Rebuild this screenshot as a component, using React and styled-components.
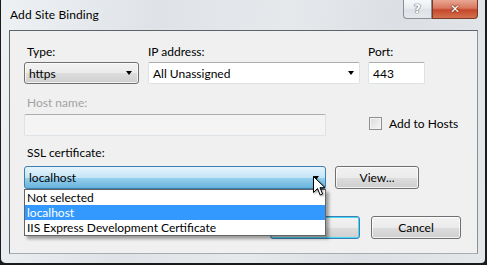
import React from 'react';
import styled, { createGlobalStyle } from 'styled-components';

const Global = createGlobalStyle`
  html, body {
    margin: 0;
    padding: 0;
    background: #1a1a1a;
  }
  body {
    font-family: "Lato", "Noto Sans", sans-serif;
    font-size: 12px;
  }
`;

const Window = styled.div`
  position: relative;
  width: 487px;
  height: 265px;
  box-sizing: border-box;
  border-left: 1px solid #1b1b1b;
  border-right: 2px solid #1b1b1b;
  border-bottom: 2px solid #1b1b1b;
  border-radius: 0 0 6px 6px;
  background: linear-gradient(100deg, #eef1f4 0%, #dfe3e7 30%, #e6e9ec 55%, #dcdfe3 75%, #e4e7ea 100%);
  display: flex;
  flex-direction: column;
  overflow: hidden;
`;

const TitleBar = styled.div`
  height: 30px;
  display: flex;
  justify-content: space-between;
  align-items: flex-start;
  padding: 0 7px 0 9px;
`;

const Title = styled.div`
  margin-top: 7px;
  font-size: 12px;
  color: #000;
  letter-spacing: 0.1px;
`;

const Caption = styled.div`
  display: flex;
`;

const CapButton = styled.div`
  width: ${p => p.$w}px;
  height: 19px;
  box-sizing: border-box;
  border: 1px solid ${p => (p.$close ? '#7a3a2a' : '#8a8f95')};
  border-top: none;
  border-radius: ${p => (p.$close ? '0 0 4px 0' : '0 0 0 4px')};
  background: ${p =>
    p.$close
      ? 'linear-gradient(#e8a794 0%, #d9785d 45%, #c5482b 55%, #d4714e 100%)'
      : 'linear-gradient(#f6f8fa 0%, #e9ecef 45%, #dde1e5 55%, #e6e9ec 100%)'};
  display: flex;
  align-items: center;
  justify-content: center;
  font-family: "DejaVu Sans", sans-serif;
  font-weight: bold;
  font-size: 12px;
  color: #fff;
  text-shadow: ${p =>
    p.$close
      ? '0 0 2px #5a1a0a, 0 0 1px #5a1a0a'
      : '0 0 1px #5d6670, 0 0 1px #5d6670, 0 0 1px #5d6670'};
`;

const Client = styled.div`
  margin: 0 7px 0 8px;
  height: 224px;
  box-sizing: border-box;
  background: #f0f0f0;
  border-top: 1px solid #5f6468;
  border-left: 1px solid #5f6468;
  border-right: 1px solid #8c9196;
  border-bottom: 1px solid #a7acb0;
  padding: 13px 0 0 14px;
  display: flex;
  flex-direction: column;
`;

const Row = styled.div`
  display: flex;
  align-items: ${p => p.$align || 'flex-start'};
  gap: ${p => p.$gap || 0}px;
  margin-top: ${p => p.$mt || 0}px;
`;

const Field = styled.div`
  display: flex;
  flex-direction: column;
  width: ${p => p.$w}px;
  margin-right: ${p => p.$mr || 0}px;
`;

const Label = styled.div`
  line-height: 15px;
  height: 15px;
  margin-bottom: ${p => p.$mb || 3}px;
  padding-left: ${p => (p.$flush ? 0 : 3)}px;
  color: ${p => (p.$disabled ? '#a3a3a3' : '#000')};
`;

const Arrow = styled.span`
  width: 0;
  height: 0;
  border-left: 3.5px solid transparent;
  border-right: 3.5px solid transparent;
  border-top: 4px solid #000;
  margin-right: ${p => p.$mr || 5}px;
`;

const ComboButton = styled.div`
  height: 22px;
  box-sizing: border-box;
  border: 1px solid #707070;
  border-radius: 3px;
  background: linear-gradient(#f2f2f2 0%, #ebebeb 50%, #dddddd 51%, #cfcfcf 100%);
  box-shadow: inset 0 0 0 1px rgba(255, 255, 255, 0.7);
  display: flex;
  align-items: center;
  justify-content: space-between;
  padding-left: 4px;
`;

const TextBox = styled.div`
  height: 22px;
  box-sizing: border-box;
  border: 1px solid #dde2e7;
  border-top-color: #abadb3;
  border-radius: 2px;
  background: ${p => (p.$disabled ? '#f4f4f4' : '#fff')};
  display: flex;
  align-items: center;
  justify-content: space-between;
  padding-left: 4px;
`;

const Check = styled.span`
  width: 13px;
  height: 13px;
  box-sizing: border-box;
  border: 1px solid #8e8f8f;
  background: linear-gradient(135deg, #dcdcdc, #f6f6f6);
  box-shadow: inset 0 0 0 1px #f4f4f4;
`;

const CheckRow = styled.label`
  display: flex;
  align-items: center;
  gap: 7px;
  margin-left: 43px;
  margin-bottom: 5px;
`;

const SslWrap = styled.div`
  position: relative;
  width: 302px;
`;

const ActiveCombo = styled.div`
  height: 23px;
  box-sizing: border-box;
  border: 1px solid #3c7fb1;
  border-radius: 3px;
  background: linear-gradient(#e5f4fc 0%, #c4e5f6 50%, #98d1ef 51%, #68b3db 100%);
  display: flex;
  align-items: center;
  justify-content: space-between;
  padding-left: 4px;
`;

const List = styled.div`
  position: absolute;
  left: 0;
  top: 100%;
  width: 302px;
  box-sizing: border-box;
  background: #fff;
  border: 1px solid #646464;
  box-shadow: 3px 3px 3px rgba(0, 0, 0, 0.35);
  z-index: 5;
`;

const Item = styled.div`
  height: 15px;
  line-height: 15px;
  padding-left: 2px;
  background: ${p => (p.$sel ? '#3399ff' : 'transparent')};
  color: ${p => (p.$sel ? '#fff' : '#000')};
`;

const Button = styled.div`
  width: ${p => p.$w}px;
  height: 23px;
  box-sizing: border-box;
  border: 1px solid ${p => (p.$def ? '#3c7fb1' : '#707070')};
  border-radius: 3px;
  background: linear-gradient(#f2f2f2 0%, #ebebeb 50%, #dddddd 51%, #cfcfcf 100%);
  box-shadow: inset 0 0 0 1px ${p => (p.$def ? '#48d9f9' : 'rgba(255,255,255,0.75)')};
  display: flex;
  align-items: center;
  justify-content: center;
  color: #000;
`;

const Footer = styled.div`
  display: flex;
  justify-content: flex-end;
  gap: 11px;
  margin-top: 27px;
  padding-right: 16px;
`;

const Cursor = styled.svg`
  position: absolute;
  left: 312px;
  top: 176px;
  z-index: 10;
  filter: drop-shadow(1px 1px 1px rgba(0, 0, 0, 0.4));
`;

export default function App() {
  return (
    <>
      <Global />
      <Window>
        <TitleBar>
          <Title>Add Site Binding</Title>
          <Caption>
            <CapButton $w={29}>?</CapButton>
            <CapButton $w={46} $close>✕</CapButton>
          </Caption>
        </TitleBar>
        <Client>
          <Row>
            <Field $w={115} $mr={9}>
              <Label>Type:</Label>
              <ComboButton>
                <span>https</span>
                <Arrow $mr={6} />
              </ComboButton>
            </Field>
            <Field $w={212} $mr={8}>
              <Label $flush>IP address:</Label>
              <TextBox>
                <span>All Unassigned</span>
                <Arrow $mr={5} />
              </TextBox>
            </Field>
            <Field $w={57}>
              <Label $flush>Port:</Label>
              <TextBox>443</TextBox>
            </Field>
          </Row>
          <Row $align="flex-end" $mt={11}>
            <Field $w={302}>
              <Label $disabled $mb={4}>Host name:</Label>
              <TextBox $disabled />
            </Field>
            <CheckRow>
              <Check />
              <span>Add to Hosts</span>
            </CheckRow>
          </Row>
          <Row $mt={9}>
            <Field $w={302}>
              <Label $mb={6}>SSL certificate:</Label>
            </Field>
          </Row>
          <Row $align="center" $gap={9}>
            <SslWrap>
              <ActiveCombo>
                <span>localhost</span>
                <Arrow $mr={6} />
              </ActiveCombo>
              <List>
                <Item>Not selected</Item>
                <Item $sel>localhost</Item>
                <Item>IIS Express Development Certificate</Item>
              </List>
            </SslWrap>
            <Button $w={84}>View...</Button>
          </Row>
          <Footer>
            <Button $w={90} $def>OK</Button>
            <Button $w={90}>Cancel</Button>
          </Footer>
        </Client>
        <Cursor width="13" height="21" viewBox="0 0 13 21">
          <path
            d="M0.5 0.5 L0.5 16.5 L4.5 12.5 L7.2 19 L9.6 18 L7 11.7 L12 11.7 Z"
            fill="#fff"
            stroke="#000"
            strokeWidth="1"
            strokeLinejoin="miter"
          />
        </Cursor>
      </Window>
    </>
  );
}
